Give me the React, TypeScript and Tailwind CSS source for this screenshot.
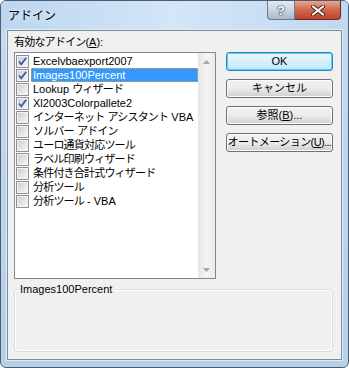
import React from 'react';

type AddinItem = {
  name: string;
  checked: boolean;
};

const items: AddinItem[] = [
  { name: 'Excelvbaexport2007', checked: true },
  { name: 'Images100Percent', checked: true },
  { name: 'Lookup ウィザード', checked: false },
  { name: 'Xl2003Colorpallete2', checked: true },
  { name: 'インターネット アシスタント VBA', checked: false },
  { name: 'ソルバー アドイン', checked: false },
  { name: 'ユーロ通貨対応ツール', checked: false },
  { name: 'ラベル印刷ウィザード', checked: false },
  { name: '条件付き合計式ウィザード', checked: false },
  { name: '分析ツール', checked: false },
  { name: '分析ツール - VBA', checked: false },
];

const font = "font-['Liberation_Sans','Noto_Sans_CJK_JP',sans-serif]";

// 全角の部分だけ少し詰める（元画面の MS UI Gothic に幅を合わせる）
const JpText: React.FC<{ text: string }> = ({ text }) => {
  const parts = text.split(/([\u3000-\u9fff\uff00-\uffef]+)/);
  return (
    <span className="whitespace-pre">
      {parts.map((p, i) =>
        /[\u3000-\u9fff\uff00-\uffef]/.test(p) ? (
          <span key={i} className="tracking-[-0.8px]">
            {p}
          </span>
        ) : (
          <React.Fragment key={i}>{p}</React.Fragment>
        ),
      )}
    </span>
  );
};

const CheckBox: React.FC<{ checked: boolean }> = ({ checked }) => (
  <span className="flex h-[13px] w-[13px] shrink-0 items-center justify-center border border-[#8e8f8f] bg-white">
    <span className="relative flex h-[11px] w-[11px] items-center justify-center border border-[#f4f4f4] bg-gradient-to-br from-[#cbcfd5] to-[#f6f6f6]">
      {checked && (
        <svg width="11" height="11" viewBox="0 0 11 11" className="absolute -left-[1px] -top-[1px]">
          <path d="M2 5.5 L4.3 8.3 L9.2 1.8" fill="none" stroke="#3d5aa8" strokeWidth="1.8" />
        </svg>
      )}
    </span>
  </span>
);

const DialogButton: React.FC<{ children: React.ReactNode; isDefault?: boolean; tight?: boolean }> = ({
  children,
  isDefault,
  tight,
}) => (
  <button
    type="button"
    className={`flex h-[19px] w-[107px] items-center justify-center whitespace-nowrap rounded-[3px] border text-[11px] leading-none text-black ${
      tight ? 'tracking-[-0.6px]' : ''
    } ${
      isDefault
        ? 'border-[#3c7fb1] bg-gradient-to-b from-[#eaf6fd] via-[#d9f0fc] to-[#bee6fd] shadow-[inset_0_0_0_1px_#48d4fc]'
        : 'border-[#707070] bg-gradient-to-b from-[#f2f2f2] via-[#ebebeb] to-[#cfcfcf] shadow-[inset_0_0_0_1px_#fcfcfc]'
    }`}
  >
    {children}
  </button>
);

const ScrollArrow: React.FC<{ up?: boolean }> = ({ up }) => (
  <div className="flex h-[17px] w-full items-center justify-center">
    <svg width="7" height="4" viewBox="0 0 7 4">
      <path d={up ? 'M0 4 L3.5 0 L7 4 Z' : 'M0 0 L3.5 4 L7 0 Z'} fill="#a3a3a3" />
    </svg>
  </div>
);

export default function App() {
  return (
    <div
      className={`flex h-[368px] w-[349px] flex-col overflow-hidden rounded-[6px] border border-[#4e5d6e] bg-gradient-to-b from-[#c4dbf1] via-[#bcd5ee] to-[#b7d0ea] ${font}`}
    >
      {/* タイトルバー */}
      <div className="flex h-[29px] shrink-0 items-start justify-between bg-gradient-to-r from-[#bcd6ef] via-[#d4e6f8] to-[#c0d8f0]">
        <span className="mt-[8px] pl-[7px] text-[12px] leading-[14px] text-black [text-shadow:0_0_6px_#ffffff]">
          アドイン
        </span>
        <div className="mr-[7px] flex">
          <div className="flex h-[19px] w-[28px] items-center justify-center rounded-bl-[4px] border border-t-0 border-[#6b7a8c] bg-gradient-to-b from-[#e2ebf4] via-[#c8d5e2] to-[#a8b9cb]">
            <span className="text-[13px] font-bold leading-none text-white [text-shadow:0_0_1px_#3a4858,0_0_1px_#3a4858,0_0_2px_#3a4858]">
              ?
            </span>
          </div>
          <div className="flex h-[19px] w-[46px] items-center justify-center rounded-br-[4px] border border-l-0 border-t-0 border-[#6b2a20] bg-gradient-to-b from-[#e8a593] via-[#d1674f] to-[#c0412a]">
            <svg width="14" height="11" viewBox="0 0 14 11">
              <path d="M2 1.5 L12 9.5 M12 1.5 L2 9.5" stroke="#4a2018" strokeWidth="4" strokeLinecap="round" />
              <path d="M2 1.5 L12 9.5 M12 1.5 L2 9.5" stroke="#ffffff" strokeWidth="2.2" strokeLinecap="round" />
            </svg>
          </div>
        </div>
      </div>

      {/* クライアント領域 */}
      <div className="mx-[6px] flex h-[330px] shrink-0 flex-col border border-[#7d8b9b] bg-[#f0f0f0] pl-[6px] pt-[4px] text-[11px] text-black shadow-[0_0_0_1px_#e0ecf8]">
        <div className="flex gap-[10px]">
          <div className="flex flex-col">
            <span className="h-[14px] leading-[14px]">
              <JpText text="有効なアドイン" />(<span className="underline">A</span>):
            </span>
            <div className="mt-[3px] flex h-[227px] w-[202px] border border-[#828790] bg-white">
              <div className="flex min-w-0 flex-1 flex-col overflow-hidden pl-[1px] pt-[1px]">
                {items.map((item, i) => {
                  const selected = i === 1;
                  return (
                    <div key={item.name} className="flex h-[14px] shrink-0 items-center">
                      <CheckBox checked={item.checked} />
                      <span
                        className={`ml-[2px] flex h-[14px] min-w-0 flex-1 items-center pl-[2px] leading-[14px] ${
                          selected ? 'bg-[#3399ff] text-white outline-1 -outline-offset-1 outline-dotted outline-[#e8a030]' : ''
                        }`}
                      >
                        <JpText text={item.name} />
                      </span>
                    </div>
                  );
                })}
              </div>
              <div className="flex w-[17px] shrink-0 flex-col justify-between bg-gradient-to-r from-[#e6e6e6] via-[#f4f4f4] to-[#ececec]">
                <ScrollArrow up />
                <ScrollArrow />
              </div>
            </div>
          </div>

          <div className="flex flex-col gap-[8px] pt-[17px]">
            <DialogButton isDefault>OK</DialogButton>
            <DialogButton>キャンセル</DialogButton>
            <DialogButton>
              参照(<span className="underline">B</span>)...
            </DialogButton>
            <DialogButton tight>
              オートメーション(<span className="underline">U</span>)...
            </DialogButton>
          </div>
        </div>

        <fieldset className="mt-[3px] h-[70px] w-[319px] rounded-[3px] border border-[#d5dfe5] px-[4px] shadow-[inset_0_0_0_1px_#ffffff]">
          <legend className="px-[1px] leading-[14px]">Images100Percent</legend>
        </fieldset>
      </div>
    </div>
  );
}
